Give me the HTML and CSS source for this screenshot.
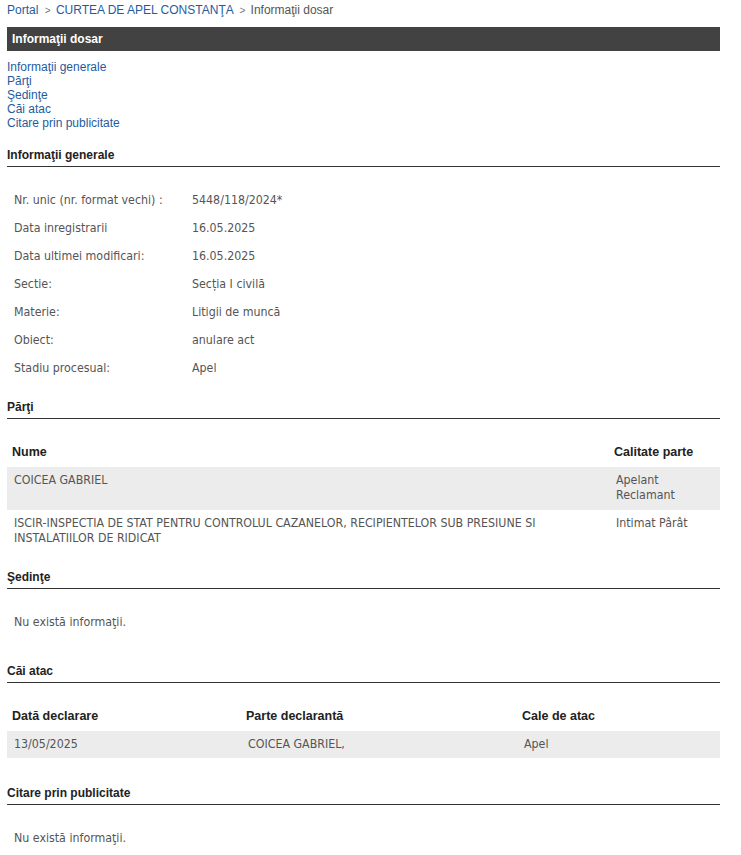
FILE: index.html
```html
<!DOCTYPE html>
<html>

<head>
    <meta charset="utf-8" />
    <meta name="viewport" content="width=device-width, initial-scale=1.0" />
    <title>Informaţii dosar</title>
    <link rel="stylesheet" href="styles.css">
</head>

<body>
    <div class="page">
        <div class="breadcrumb">
            <a href="#">Portal</a>
            <span class="sep">&gt;</span>
            <a href="#">CURTEA DE APEL CONSTANŢA</a>
            <span class="sep">&gt;</span>
            <span class="current">Informaţii dosar</span>
        </div>

        <div class="title-bar">Informaţii dosar</div>

        <div class="anchors">
            <a href="#generale">Informaţii generale</a>
            <a href="#parti">Părţi</a>
            <a href="#sedinte">Şedinţe</a>
            <a href="#cai-atac">Căi atac</a>
            <a href="#citare">Citare prin publicitate</a>
        </div>

        <!-- Informatii generale -->
        <div class="section-title first" id="generale">Informaţii generale</div>
        <div class="info-list">
            <div class="info-row"><span class="info-label">Nr. unic (nr. format vechi) :</span><span>5448/118/2024*</span></div>
            <div class="info-row"><span class="info-label">Data inregistrarii</span><span>16.05.2025</span></div>
            <div class="info-row"><span class="info-label">Data ultimei modificari:</span><span>16.05.2025</span></div>
            <div class="info-row"><span class="info-label">Sectie:</span><span>Secția I civilă</span></div>
            <div class="info-row"><span class="info-label">Materie:</span><span>Litigii de muncă</span></div>
            <div class="info-row"><span class="info-label">Obiect:</span><span>anulare act</span></div>
            <div class="info-row"><span class="info-label">Stadiu procesual:</span><span>Apel</span></div>
        </div>

        <!-- Parti -->
        <div class="section-title after-info" id="parti">Părţi</div>
        <table class="data-table parti">
            <thead>
                <tr>
                    <th class="col-nume">Nume</th>
                    <th>Calitate parte</th>
                </tr>
            </thead>
            <tbody>
                <tr class="odd">
                    <td>COICEA GABRIEL</td>
                    <td><div class="calitate">Apelant Reclamant</div></td>
                </tr>
                <tr>
                    <td>ISCIR-INSPECTIA DE STAT PENTRU CONTROLUL CAZANELOR, RECIPIENTELOR SUB PRESIUNE SI INSTALATIILOR DE RIDICAT</td>
                    <td><div class="calitate">Intimat Pârât</div></td>
                </tr>
            </tbody>
        </table>

        <!-- Sedinte -->
        <div class="section-title after-table" id="sedinte">Şedinţe</div>
        <div class="empty">Nu există informaţii.</div>

        <!-- Cai atac -->
        <div class="section-title after-empty" id="cai-atac">Căi atac</div>
        <table class="data-table cai-atac">
            <thead>
                <tr>
                    <th class="col-data">Dată declarare</th>
                    <th class="col-parte">Parte declarantă</th>
                    <th>Cale de atac</th>
                </tr>
            </thead>
            <tbody>
                <tr class="odd">
                    <td>13/05/2025</td>
                    <td>COICEA GABRIEL,</td>
                    <td>Apel</td>
                </tr>
            </tbody>
        </table>

        <!-- Citare prin publicitate -->
        <div class="section-title after-cai" id="citare">Citare prin publicitate</div>
        <div class="empty">Nu există informaţii.</div>
    </div>
</body>

</html>
```

FILE: styles.css
```css
/* Stiluri generale */
body {
    margin: 0;
    font-family: 'Liberation Sans', Arial, sans-serif;
    font-size: 12px;
    background-color: #ffffff;
    color: #333;
}

a {
    color: #1f5c9e;
    text-decoration: none;
}

.page {
    width: 713px;
    padding: 3px 7px 20px;
}

/* Navigare */
.breadcrumb {
    line-height: 15px;
    color: #555;
}

.breadcrumb .sep {
    font-size: 10px;
    color: #777;
    margin: 0 2px 0 3px;
}

.breadcrumb .current {
    color: #555;
}

.title-bar {
    margin-top: 9px;
    height: 24px;
    line-height: 24px;
    padding-left: 5px;
    background-color: #424242;
    color: #fff;
    font-weight: bold;
}

.anchors {
    margin-top: 9px;
}

.anchors a {
    display: block;
    line-height: 14px;
}

/* Titluri sectiuni */
.section-title {
    line-height: 14px;
    padding-bottom: 4px;
    border-bottom: 1px solid #333;
    font-weight: bold;
    color: #222;
}

.section-title.first {
    margin-top: 18px;
}

.section-title.after-info {
    margin-top: 18px;
}

.section-title.after-table {
    margin-top: 17px;
}

.section-title.after-empty {
    margin-top: 35px;
}

.section-title.after-cai {
    margin-top: 28px;
}

/* Informatii generale */
.info-list {
    margin-top: 19px;
    font-family: 'DejaVu Sans Condensed', Tahoma, sans-serif;
    font-size: 12.3px;
    color: #555;
}

.info-row {
    display: flex;
    height: 28px;
    line-height: 28px;
    padding-left: 7px;
}

.info-label {
    width: 178px;
}

/* Tabele */
.data-table {
    width: 100%;
    border-collapse: collapse;
    margin-top: 17px;
}

.data-table th {
    text-align: left;
    font-size: 12.5px;
    font-weight: bold;
    color: #222;
    height: 31px;
    padding: 0 5px;
    vertical-align: middle;
}

.data-table td {
    font-family: 'DejaVu Sans Condensed', Tahoma, sans-serif;
    font-size: 12.3px;
    line-height: 15px;
    color: #555;
    padding: 6px 7px 7px;
    vertical-align: top;
}

.data-table tr.odd td {
    background-color: #ececec;
}

.parti .col-nume {
    width: 592px;
}

.parti .calitate {
    max-width: 90px;
}

.cai-atac .col-data {
    width: 224px;
}

.cai-atac .col-parte {
    width: 266px;
}

.cai-atac td {
    padding: 6px 7px;
}

.empty {
    margin-top: 26px;
    padding-left: 7px;
    line-height: 14px;
    font-family: 'DejaVu Sans Condensed', Tahoma, sans-serif;
    font-size: 12.3px;
    color: #555;
}
```
